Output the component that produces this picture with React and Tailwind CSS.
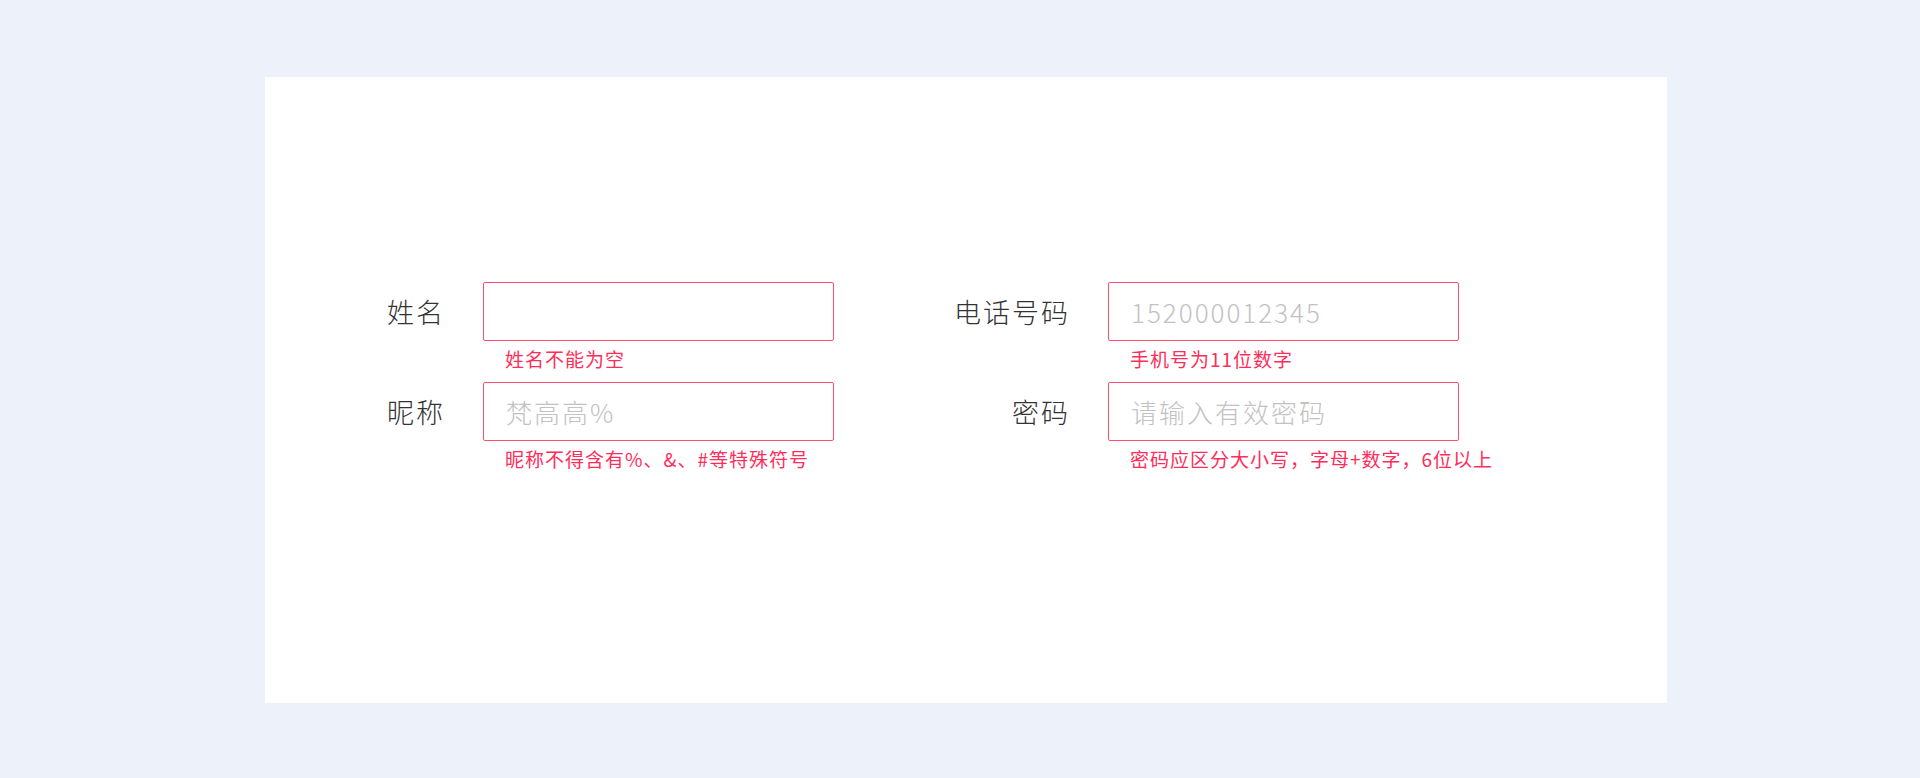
const font = { fontFamily: '"Noto Sans CJK SC", "Noto Sans", sans-serif' };

function Field({ label, placeholder, error }) {
  return (
    <div className="flex flex-col">
      <div className="flex items-center">
        <div className="w-[130px] text-right text-[27px] font-light tracking-[2px] text-[#333333] leading-none">
          {label}
        </div>
        <div className="ml-[38px] w-[351px] h-[59px] border border-[#ff4d6d] rounded-[2px] flex items-center pl-[22px] text-[26px] font-light tracking-[2px] text-[#c2c2c2]">
          {placeholder}
        </div>
      </div>
      <div className="h-[41px] pl-[190px] pt-[6px] text-[19px] leading-[24px] tracking-[1px] text-[#ff2d5a] whitespace-nowrap">
        {error}
      </div>
    </div>
  );
}

function App() {
  return (
    <div className="min-h-screen w-full bg-[#ecf1fa] pt-[77px]" style={font}>
      <div className="ml-[265px] w-[1402px] h-[626px] bg-white pt-[205px] pl-[50px]">
        <div className="grid grid-cols-[519px_519px] gap-x-[106px]">
          <Field label="姓名" placeholder="" error="姓名不能为空" />
          <Field label="电话号码" placeholder="152000012345" error="手机号为11位数字" />
          <Field label="昵称" placeholder="梵高高%" error="昵称不得含有%、&、#等特殊符号" />
          <Field label="密码" placeholder="请输入有效密码" error="密码应区分大小写，字母+数字，6位以上" />
        </div>
      </div>
    </div>
  );
}

export default App;
